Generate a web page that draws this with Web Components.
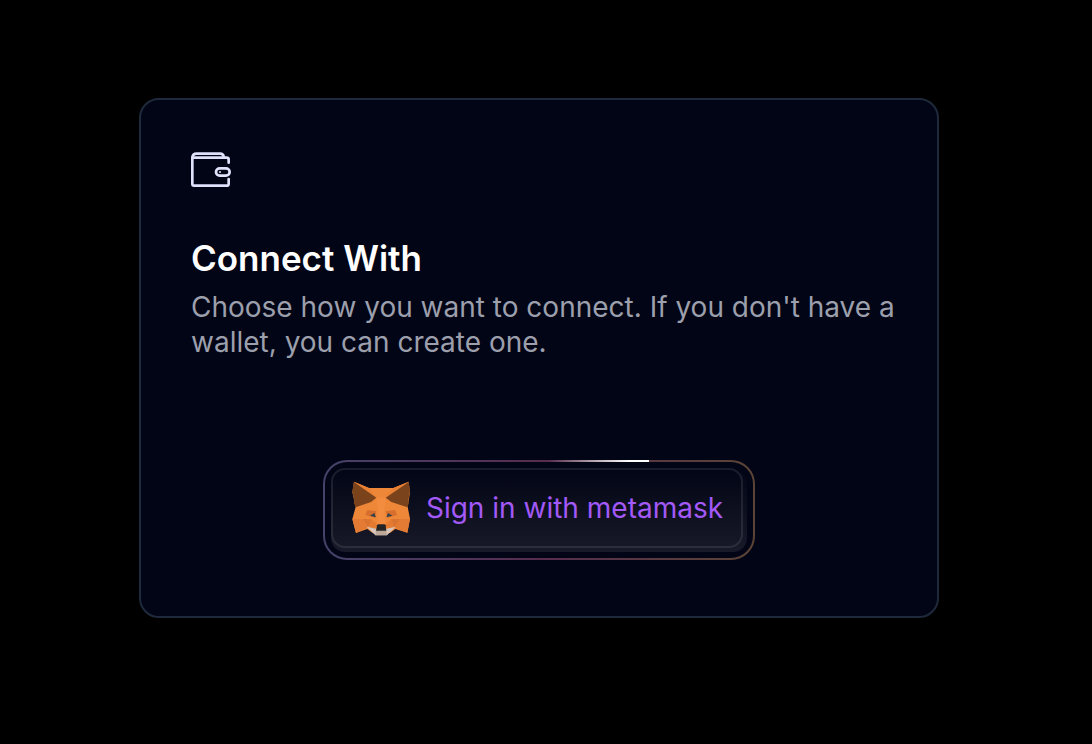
<!DOCTYPE html>
<html lang="en">
<head>
<meta charset="utf-8">
<meta name="viewport" content="width=device-width, initial-scale=1">
<title>Connect With</title>
<style>
  body {
    margin: 0;
    background: #000;
    font-family: Inter, "Liberation Sans", sans-serif;
  }
</style>
</head>
<body>
<connect-page>
  <connect-card>
    <wallet-icon slot="icon"></wallet-icon>
    <span slot="title">Connect With</span>
    <span slot="description">Choose how you want to connect. If you don't have a wallet, you can create one.</span>
    <glow-button>
      <fox-icon slot="icon"></fox-icon>
      Sign in with metamask
    </glow-button>
  </connect-card>
</connect-page>

<script>
// Attaches a shadow root filled with the given markup.
function define(name, html) {
  const template = document.createElement("template");
  template.innerHTML = html;

  customElements.define(name, class extends HTMLElement {
    constructor() {
      super();
      this._shadow = this.attachShadow({mode: "open"});
      this._shadow.appendChild(template.content.cloneNode(true));
    }
  });
}

define("connect-page", `
  <style>
    :host {
      display: flex;
      justify-content: center;
      align-items: center;
      box-sizing: border-box;
      min-height: 100vh;
      padding: 16px 32px 44px 18px;
    }
  </style>
  <slot></slot>
`);

define("connect-card", `
  <style>
    :host {
      display: block;
      box-sizing: border-box;
      width: 100%;
      max-width: 800px;
      padding: 52px 36px 56px;
      border: 2px solid #1e293b;
      border-radius: 20px;
      background: #020515;
    }

    header {
      padding-left: 14px;
    }

    h1 {
      margin: 48px 0 10px;
      color: #fff;
      font-size: 35px;
      font-weight: 600;
      line-height: 44px;
    }

    p {
      margin: 0;
      color: #9c9fac;
      font-size: 28px;
      line-height: 35px;
    }

    .actions {
      display: flex;
      justify-content: center;
      margin-top: 100px;
    }
  </style>
  <header>
    <slot name="icon"></slot>
    <h1><slot name="title"></slot></h1>
    <p><slot name="description"></slot></p>
  </header>
  <div class="actions"><slot></slot></div>
`);

define("glow-button", `
  <style>
    :host {
      display: block;
    }

    button {
      display: block;
      padding: 6px;
      border: 2px solid transparent;
      border-radius: 24px;
      background:
        linear-gradient(#020515, #020515) padding-box,
        linear-gradient(90deg, transparent, #fff 80%) 68% 0 / 100px 2px no-repeat border-box,
        linear-gradient(90deg, #45426a, #572d4f 50%, #5b4436) border-box;
      color: #a259f7;
      font: inherit;
      font-size: 28px;
      line-height: 36px;
      cursor: pointer;
    }

    .shell {
      display: block;
      padding: 0 4px 4px 0;
      border-radius: 14px;
      background: linear-gradient(#020515, #181a29);
    }

    .face {
      display: flex;
      align-items: center;
      gap: 16px;
      box-sizing: border-box;
      min-height: 80px;
      padding: 0 18px 0 19px;
      border: 2px solid #ffffff18;
      border-radius: 14px;
    }
  </style>
  <button type="button">
    <span class="shell">
      <span class="face">
        <slot name="icon"></slot>
        <span><slot></slot></span>
      </span>
    </span>
  </button>
`);

define("wallet-icon", `
  <style>
    :host, svg {
      display: block;
    }
  </style>
  <svg width="40" height="36" viewBox="0 0 120 108" fill="none" stroke="#e0e1fb" stroke-width="8" stroke-linecap="round" stroke-linejoin="round" aria-hidden="true">
    <path d="M113 32V23Q113 17 107 17H4V96Q4 101 9 101H107Q113 101 113 95V81"/>
    <path d="M4 17Q5 5 17 5H88Q96 5 98 13"/>
    <rect x="75" y="49" width="41" height="22" rx="11"/>
    <circle cx="87" cy="60" r="3" fill="#e0e1fb" stroke="none"/>
  </svg>
`);

define("fox-icon", `
  <style>
    :host, svg {
      display: block;
    }
  </style>
  <svg width="58" height="55" viewBox="36 28 174 165" aria-hidden="true">
    <path fill="#ef8738" d="M42 30 87 49H160L206 30 210 62 203 106 210 141 202 183 166 172 150 184H98L82 172 48 184 37 142 47 106 37 62Z"/>
    <path fill="#e98034" d="M42 30 87 49 110 78ZM206 30 160 49 137 78Z"/>
    <path fill="#7a431c" d="M42 31 109 78 93 91 47 107 41 93 43 86 37 59ZM206 31 137 78 154 91 202 107 207 93 205 86 210 59Z"/>
    <path fill="#e47b34" d="M37 142H72L83 168 48 184ZM210 142H175L165 168 202 183Z"/>
    <path fill="#d9732f" d="M70 142 94 143 84 168ZM178 142 153 143 163 168Z"/>
    <path fill="#d66e2e" d="M109 119 104 138 76 130 82 115ZM137 119 143 138 171 130 165 115Z"/>
    <path fill="#f28d3f" d="M110 78H137L133 119 136 161H111L114 119Z"/>
    <path fill="#e47b31" d="M94 143 110 157 106 173 85 168ZM153 143 137 157 141 173 162 168Z"/>
    <path fill="#d8c6ba" d="M80 165 108 171H139L167 165 141 191H106Z"/>
    <path fill="#bba899" d="M108 176H139L141 191H106Z"/>
    <path fill="#242424" d="M111 161 114 158H134L137 161 139 177H108Z"/>
    <path fill="#33434b" d="M90 132 103 124 108 137ZM157 132 144 124 139 137Z"/>
  </svg>
`);
</script>
</body>
</html>
